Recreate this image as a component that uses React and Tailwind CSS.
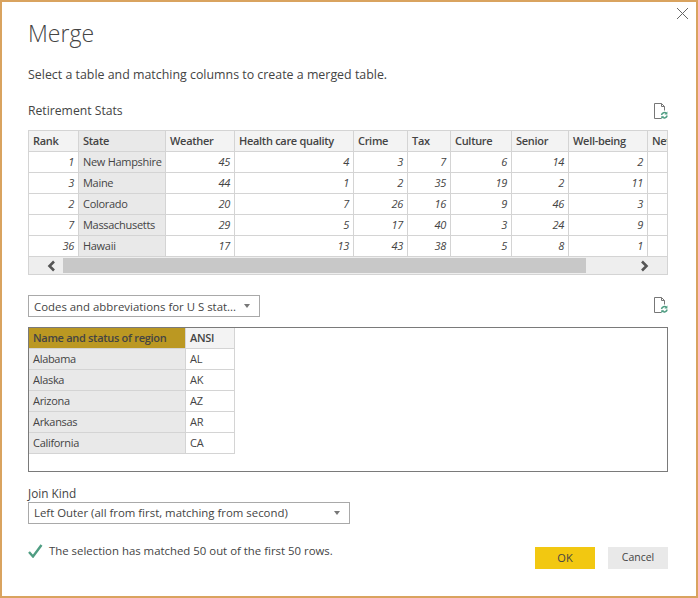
import React from 'react'

const columns = [
  { name: 'Rank', w: 'w-[50px]' },
  { name: 'State', w: 'w-[87px]' },
  { name: 'Weather', w: 'w-[69px]' },
  { name: 'Health care quality', w: 'w-[119px]' },
  { name: 'Crime', w: 'w-[54px]' },
  { name: 'Tax', w: 'w-[43px]' },
  { name: 'Culture', w: 'w-[61px]' },
  { name: 'Senior', w: 'w-[57px]' },
  { name: 'Well-being', w: 'w-[79px]' },
  { name: 'Net', w: 'w-[40px]' },
]

const rows = [
  [1, 'New Hampshire', 45, 4, 3, 7, 6, 14, 2],
  [3, 'Maine', 44, 1, 2, 35, 19, 2, 11],
  [2, 'Colorado', 20, 7, 26, 16, 9, 46, 3],
  [7, 'Massachusetts', 29, 5, 17, 40, 3, 24, 9],
  [36, 'Hawaii', 17, 13, 43, 38, 5, 8, 1],
]

const states = [
  ['Alabama', 'AL'],
  ['Alaska', 'AK'],
  ['Arizona', 'AZ'],
  ['Arkansas', 'AR'],
  ['California', 'CA'],
]

function RefreshDoc() {
  return (
    <svg width="16" height="18" viewBox="0 0 16 18" fill="none">
      <path d="M8 15.5H1.5V0.5H8.5L11.5 3.5V7.5M8.5 0.5V3.5H11.5" stroke="#777777" strokeWidth="1" />
      <path d="M8.5 12a3 3 0 0 1 5-1.6M14.2 12.5a3 3 0 0 1-5 1.6" stroke="#4f9d82" strokeWidth="1.4" />
      <path d="M14.4 8.4v3h-3zM8.2 16.2v-3h3z" fill="#4f9d82" />
    </svg>
  )
}

function Caret() {
  return <span className="w-0 h-0 border-x-[3px] border-x-transparent border-t-[4px] border-t-[#777777]" />
}

export default function App() {
  const cell = 'h-[21px] p-0 px-1 border-r border-b border-[#d4d4d4] overflow-hidden whitespace-nowrap text-[11px] tracking-[-0.3px]'

  return (
    <div className="w-[698px] h-[598px] bg-white border-2 border-[#d9a35f] relative text-[#444444] text-[11px] font-['Open_Sans',sans-serif] overflow-hidden">
      <button className="absolute top-[5px] right-[7px] text-[#666666]">
        <svg width="13" height="13" viewBox="0 0 13 13" stroke="currentColor" strokeWidth="1">
          <path d="M1 1l11 11M12 1L1 12" />
        </svg>
      </button>

      <div className="pl-[26px] pr-[28px]">
        <h1 className="pt-[14px] h-[48px] text-[23px] leading-[34px] font-light text-[#444444]">Merge</h1>
        <p className="mt-[15px] h-[20px] text-[12.4px] leading-[20px]">Select a table and matching columns to create a merged table.</p>

        <div className="mt-[15px] h-[22px] flex items-center justify-between">
          <span className="text-[12.2px]">Retirement Stats</span>
          <span className="mr-[-1px] mt-[1px]"><RefreshDoc /></span>
        </div>

        <div className="mt-[8px] h-[145px] border border-[#d4d4d4] overflow-hidden">
          <table className="table-fixed w-[659px] border-separate border-spacing-0">
            <thead>
              <tr>
                {columns.map((c, i) => (
                  <th key={c.name} className={`${cell} ${c.w} text-left font-semibold ${i === 1 ? 'bg-[#e9e9e9]' : 'bg-[#f3f3f3]'}`}>{c.name}</th>
                ))}
              </tr>
            </thead>
            <tbody>
              {rows.map(r => (
                <tr key={r[1]}>
                  {r.map((v, i) => (
                    <td key={i} className={`${cell} ${i === 1 ? 'bg-[#e9e9e9]' : 'italic text-right'}`}>{v}</td>
                  ))}
                  <td className={cell} />
                </tr>
              ))}
            </tbody>
          </table>
          <div className="h-[17px] flex items-center bg-[#eeeeee]">
            <div className="w-[34px] flex justify-end pr-[7px]">
              <svg width="10" height="12" viewBox="0 0 10 12" fill="none" stroke="#555555" strokeWidth="2.6"><path d="M8 1.5L3.5 6 8 10.5" /></svg>
            </div>
            <div className="w-[523px] h-[15px] bg-[#c8c8c8]" />
            <div className="flex-1 flex justify-end pr-[17px]">
              <svg width="10" height="12" viewBox="0 0 10 12" fill="none" stroke="#555555" strokeWidth="2.6"><path d="M2 1.5L6.5 6 2 10.5" /></svg>
            </div>
          </div>
        </div>

        <div className="mt-[20px] h-[22px] flex items-center justify-between">
          <div className="w-[232px] h-[22px] border border-[#a9a9a9] flex items-center justify-between pl-[5px] pr-[9px] text-[11.4px] leading-none whitespace-nowrap">
            <span className="mt-[1px]">Codes and abbreviations for U S stat...</span>
            <Caret />
          </div>
          <span className="mr-[-1px] mt-[-1px]"><RefreshDoc /></span>
        </div>

        <div className="mt-[10px] h-[145px] border border-[#7a7a7a] overflow-hidden">
          <table className="table-fixed w-[206px] border-separate border-spacing-0">
            <thead>
              <tr>
                <th className={`${cell} w-[157px] text-left font-semibold bg-[#bb9822]`}>Name and status of region</th>
                <th className={`${cell} w-[49px] text-left font-semibold bg-[#f3f3f3]`}>ANSI</th>
              </tr>
            </thead>
            <tbody>
              {states.map(s => (
                <tr key={s[1]}>
                  <td className={`${cell} bg-[#e9e9e9]`}>{s[0]}</td>
                  <td className={cell}>{s[1]}</td>
                </tr>
              ))}
            </tbody>
          </table>
        </div>

        <div className="mt-[12px] h-[18px] text-[11.8px] leading-[18px]">Join Kind</div>
        <div className="w-[322px] h-[22px] border border-[#a9a9a9] flex items-center justify-between pl-[5px] pr-[9px] text-[11.4px]">
          <span>Left Outer (all from first, matching from second)</span>
          <Caret />
        </div>

        <div className="mt-[23px] flex items-start justify-between">
          <div className="flex items-center gap-[6px] h-[18px] mt-[-5px]">
            <svg width="15" height="14" viewBox="0 0 15 14" fill="none" stroke="#4f9d82" strokeWidth="2.4"><path d="M1 8l4 4.5L13.5 1" /></svg>
            <span className="text-[11.4px]">The selection has matched 50 out of the first 50 rows.</span>
          </div>
          <div className="flex gap-[13px]">
            <button className="w-[60px] h-[22px] bg-[#f2c811] text-[11px]">OK</button>
            <button className="w-[60px] h-[22px] bg-[#e9e9e9] text-[10.5px]">Cancel</button>
          </div>
        </div>
      </div>
    </div>
  )
}
